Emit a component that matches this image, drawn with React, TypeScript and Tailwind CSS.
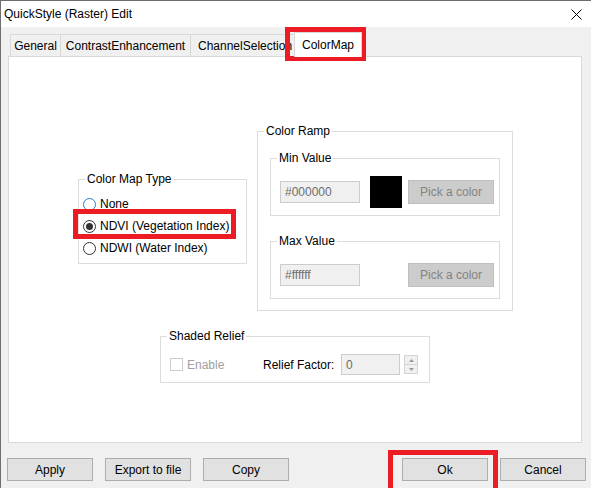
import type { ReactNode } from "react";

function GroupBox({ label, className, children }: { label: string; className?: string; children?: ReactNode }) {
  return (
    <div className={`relative border border-[#dcdcdc] ${className ?? ""}`}>
      <span className="absolute -top-[8px] left-[6px] bg-white px-[2px] leading-[14px]">{label}</span>
      {children}
    </div>
  );
}

function Radio({ checked, focused, label }: { checked?: boolean; focused?: boolean; label: string }) {
  return (
    <div className="flex h-[22px] items-center">
      <span
        className={`flex h-[13px] w-[13px] items-center justify-center rounded-full border bg-white ${
          focused ? "border-[#2f7bc4]" : "border-[#333333]"
        }`}
      >
        {checked && <span className="h-[7px] w-[7px] rounded-full bg-[#333333]" />}
      </span>
      <span className="ml-[4px] leading-[14px]">{label}</span>
    </div>
  );
}

function Button({ children }: { children: ReactNode }) {
  return (
    <button className="flex h-[23px] w-[86px] items-center justify-center border border-[#adadad] bg-[#e1e1e1] leading-[14px]">
      {children}
    </button>
  );
}

function ColorRow({ value, swatch }: { value: string; swatch?: boolean }) {
  return (
    <div className="flex items-center pl-[9px] pt-[17px]">
      <div className="flex h-[22px] w-[80px] items-center border border-[#cccccc] bg-[#f0f0f0] pl-[4px] text-[#6d6d6d]">
        {value}
      </div>
      <div className={`ml-[10px] h-[32px] w-[32px] ${swatch ? "bg-black" : ""}`} />
      <button
        disabled
        className="ml-[6px] flex h-[24px] w-[86px] items-center justify-center border border-[#bfbfbf] bg-[#cccccc] text-[#838383]"
      >
        Pick a color
      </button>
    </div>
  );
}

export default function App() {
  return (
    <div className="relative h-[488px] w-[591px] overflow-hidden border-l border-t border-[#6e6e6e] bg-[#f0f0f0] font-['Liberation_Sans',Arial,sans-serif] text-[12px] text-black">
      {/* title bar */}
      <div className="flex h-[26px] items-center justify-between bg-white pl-[3px] pr-[9px]">
        <span>QuickStyle (Raster) Edit</span>
        <svg width="11" height="11" viewBox="0 0 11 11" className="text-black">
          <path d="M0.5 0.5 L10.5 10.5 M10.5 0.5 L0.5 10.5" stroke="currentColor" strokeWidth="1" />
        </svg>
      </div>

      {/* tabs */}
      <div className="ml-[9px] mt-[5px] flex h-[24px] items-end">
        <div className="flex h-[22px] w-[51px] items-center justify-center border border-b-0 border-[#d9d9d9] pt-[1px]">General</div>
        <div className="flex h-[22px] w-[130px] items-center justify-center border border-b-0 border-l-0 border-[#d9d9d9] pt-[1px]">
          ContrastEnhancement
        </div>
        <div className="flex h-[22px] w-[105px] items-center overflow-hidden whitespace-nowrap border border-b-0 border-l-0 border-[#d9d9d9] pl-[7px] pt-[1px]">
          ChannelSelection
        </div>
        <div className="relative z-10 -mb-[1px] -ml-[2px] flex h-[25px] w-[68px] items-center justify-center border border-b-0 border-[#d9d9d9] bg-white pb-[1px]">
          ColorMap
        </div>
      </div>

      {/* tab page */}
      <div className="ml-[7px] h-[387px] w-[574px] border border-[#d9d9d9] bg-white">
        <div className="flex items-start pl-[69px] pt-[74px]">
          <GroupBox label="Color Map Type" className="mt-[48px] h-[85px] w-[169px]">
            <div className="flex flex-col pl-[4px] pt-[13px]">
              <Radio focused label="None" />
              <Radio checked label="NDVI (Vegetation Index)" />
              <Radio label="NDWI (Water Index)" />
            </div>
          </GroupBox>

          <GroupBox label="Color Ramp" className="ml-[10px] h-[180px] w-[256px]">
            <div className="flex flex-col gap-[25px] pl-[12px] pt-[26px]">
              <GroupBox label="Min Value" className="h-[58px] w-[230px]">
                <ColorRow value="#000000" swatch />
              </GroupBox>
              <GroupBox label="Max Value" className="h-[58px] w-[230px]">
                <ColorRow value="#ffffff" />
              </GroupBox>
            </div>
          </GroupBox>
        </div>

        <GroupBox label="Shaded Relief" className="ml-[151px] mt-[25px] h-[47px] w-[270px]">
          <div className="flex items-center pl-[9px] pt-[17px]">
            <div className="flex w-[93px] items-center">
              <span className="h-[13px] w-[13px] border border-[#cccccc] bg-white" />
              <span className="ml-[4px] text-[#a0a0a0]">Enable</span>
            </div>
            <span className="w-[78px]">Relief Factor:</span>
            <div className="flex h-[21px] w-[59px] items-center border border-[#cccccc] bg-[#f0f0f0] pl-[4px] text-[#6d6d6d]">
              0
            </div>
            <div className="ml-[4px] flex h-[19px] w-[14px] flex-col border border-[#d4d4d4] bg-[#f0f0f0]">
              <div className="flex flex-1 items-center justify-center border-b border-[#d4d4d4]">
                <svg width="5" height="3" viewBox="0 0 5 3">
                  <path d="M0 3 L2.5 0 L5 3 Z" fill="#9a9a9a" />
                </svg>
              </div>
              <div className="flex flex-1 items-center justify-center">
                <svg width="5" height="3" viewBox="0 0 5 3">
                  <path d="M0 0 L2.5 3 L5 0 Z" fill="#9a9a9a" />
                </svg>
              </div>
            </div>
          </div>
        </GroupBox>
      </div>

      {/* dialog buttons */}
      <div className="mt-[15px] flex gap-[12px] pl-[6px] pr-[5px]">
        <Button>Apply</Button>
        <Button>Export to file</Button>
        <Button>Copy</Button>
        <div className="flex-1" />
        <Button>Ok</Button>
        <Button>Cancel</Button>
      </div>

      {/* highlight marks */}
      <div className="absolute left-[284px] top-[26px] h-[34px] w-[81px] border-[5px] border-[#ed1c24]" />
      <div className="absolute left-[72px] top-[208px] h-[30px] w-[163px] border-[5px] border-[#ed1c24]" />
      <div className="absolute left-[387px] top-[449px] h-[50px] w-[110px] border-[5px] border-[#ed1c24]" />
    </div>
  );
}
